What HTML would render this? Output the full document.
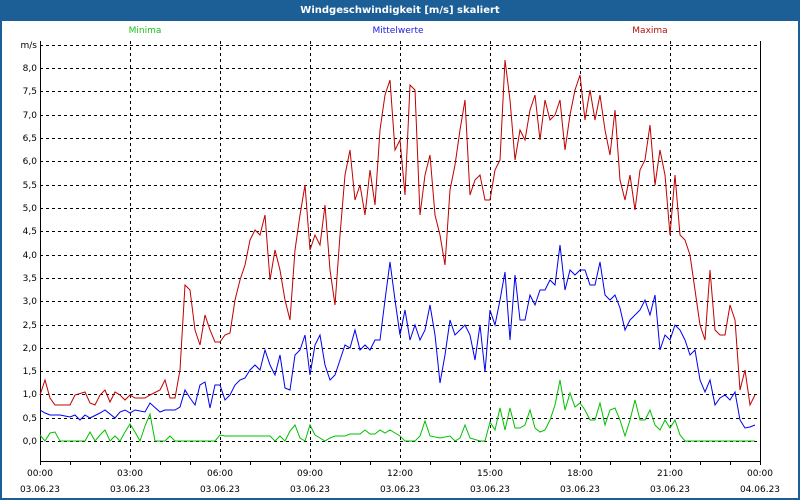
<!DOCTYPE html>
<html><head><meta charset="utf-8"><style>
html,body{margin:0;padding:0;width:800px;height:500px;overflow:hidden;background:#1c5e96;}
</style></head><body>
<svg width="800" height="500" xmlns="http://www.w3.org/2000/svg" style="position:absolute;left:0;top:0;font-family:'DejaVu Sans','Liberation Sans',sans-serif">
<rect x="0" y="0" width="800" height="500" fill="#1c5e96"/>
<rect x="2" y="21" width="796" height="477" fill="#fff"/>
<text x="400" y="13" fill="#fff" font-size="10" font-weight="bold" text-anchor="middle">Windgeschwindigkeit [m/s] skaliert</text>
<text x="145" y="33" fill="#20c020" font-size="9" text-anchor="middle">Minima</text>
<text x="398" y="33" fill="#2020e0" font-size="9" text-anchor="middle">Mittelwerte</text>
<text x="650" y="33" fill="#b01010" font-size="9" text-anchor="middle">Maxima</text>
<g stroke="#000" stroke-width="1" stroke-dasharray="3,3" fill="none">
<path d="M40 45.5H760M40 68.5H760M40 91.5H760M40 115.5H760M40 138.5H760M40 161.5H760M40 185.5H760M40 208.5H760M40 231.5H760M40 255.5H760M40 278.5H760M40 301.5H760M40 325.5H760M40 348.5H760M40 371.5H760M40 394.5H760M40 418.5H760M40 441.5H760"/>
<path d="M130.5 41V461M220.5 41V461M310.5 41V461M400.5 41V461M490.5 41V461M580.5 41V461M670.5 41V461"/>
</g>
<path d="M40.5 41V461.5H760.5V41" stroke="#000" fill="none"/>
<path d="M40.5 461V465M70.5 461V465M100.5 461V465M130.5 461V465M160.5 461V465M190.5 461V465M220.5 461V465M250.5 461V465M280.5 461V465M310.5 461V465M340.5 461V465M370.5 461V465M400.5 461V465M430.5 461V465M460.5 461V465M490.5 461V465M520.5 461V465M550.5 461V465M580.5 461V465M610.5 461V465M640.5 461V465M670.5 461V465M700.5 461V465M730.5 461V465M760.5 461V465" stroke="#000"/>
<g font-size="9" fill="#000" text-anchor="end">
<text x="37" y="48">m/s</text><text x="37" y="71">8,0</text><text x="37" y="94">7,5</text><text x="37" y="118">7,0</text><text x="37" y="141">6,5</text><text x="37" y="164">6,0</text><text x="37" y="188">5,5</text><text x="37" y="211">5,0</text><text x="37" y="234">4,5</text><text x="37" y="258">4,0</text><text x="37" y="281">3,5</text><text x="37" y="304">3,0</text><text x="37" y="328">2,5</text><text x="37" y="351">2,0</text><text x="37" y="374">1,5</text><text x="37" y="397">1,0</text><text x="37" y="421">0,5</text><text x="37" y="444">0,0</text>
</g>
<g font-size="9" fill="#000" text-anchor="middle">
<text x="40" y="476">00:00</text><text x="130" y="476">03:00</text><text x="220" y="476">06:00</text><text x="310" y="476">09:00</text><text x="400" y="476">12:00</text><text x="490" y="476">15:00</text><text x="580" y="476">18:00</text><text x="670" y="476">21:00</text><text x="760" y="476">00:00</text>
<text x="40" y="492">03.06.23</text><text x="130" y="492">03.06.23</text><text x="220" y="492">03.06.23</text><text x="310" y="492">03.06.23</text><text x="400" y="492">03.06.23</text><text x="490" y="492">03.06.23</text><text x="580" y="492">03.06.23</text><text x="670" y="492">03.06.23</text><text x="760" y="492">04.06.23</text>
</g>
<polyline fill="none" stroke="#00c000" stroke-width="1" points="40,435 45,441 50,433 55,432 60,441 85,441 90,432 95,441 100,435 105,430 110,441 115,436 120,441 125,432 130,424 135,432 140,441 145,426 150,414 155,441 165,441 170,436 175,441 215,441 220,435 225,436 270,436 275,441 280,436 285,441 290,431 295,425 300,438 305,441 310,425 315,435 320,438 325,441 330,438 335,436 345,436 350,434 360,434 365,430 370,434 375,434 380,430 385,433 390,430 395,433 400,436 405,441 415,441 420,436 425,421 430,436 440,438 450,436 455,441 460,438 465,425 470,438 480,441 485,441 490,422 495,430 500,408 505,430 510,408 515,428 520,428 525,425 530,410 535,428 540,432 545,430 550,420 555,405 560,380 565,410 570,393 575,407 580,403 585,410 590,420 595,420 600,403 605,425 610,410 615,408 620,420 625,436 630,420 635,400 640,420 645,420 650,410 655,425 660,430 665,420 670,428 675,420 680,435 685,441 755,441"/>
<polyline fill="none" stroke="#0000f0" stroke-width="1" points="40,410 45,413 50,415 60,415 70,417 75,415 80,420 85,415 90,418 100,413 105,410 115,418 120,412 125,410 130,413 135,410 145,412 150,403 160,412 165,410 175,410 180,407 185,390 190,398 195,405 200,385 205,382 210,408 215,385 220,385 225,400 230,395 235,385 240,380 245,378 250,370 255,365 260,370 265,350 270,365 275,375 280,355 285,388 290,390 295,355 300,350 305,335 310,375 315,345 320,335 325,365 330,380 335,375 340,360 345,345 350,348 355,330 360,350 365,345 370,350 375,340 380,340 385,300 390,262 395,300 400,335 405,310 410,340 415,325 420,340 425,330 430,305 435,335 440,383 445,355 450,320 455,335 460,330 465,325 470,335 475,360 480,325 485,372 490,310 495,325 500,300 505,272 510,340 515,275 520,320 525,320 530,295 535,305 540,290 545,290 550,280 555,285 560,245 565,290 570,270 575,275 580,270 585,270 590,285 595,285 600,262 605,295 610,300 615,295 620,308 625,330 630,320 635,315 640,310 645,300 650,315 655,295 660,350 665,335 670,340 675,325 680,330 685,340 690,355 695,350 700,380 705,392 710,380 715,405 720,398 725,395 730,400 735,392 740,420 745,428 750,427 755,425"/>
<polyline fill="none" stroke="#c00000" stroke-width="1" points="40,395 45,380 50,398 55,405 70,405 75,395 85,392 90,403 95,405 100,395 105,390 110,402 115,392 120,395 125,400 130,395 135,398 145,398 150,395 160,390 165,380 170,398 175,398 180,370 185,285 190,290 195,330 200,345 205,315 210,330 215,342 220,342 225,335 230,333 235,300 240,280 245,265 250,240 255,230 260,235 265,215 270,280 275,250 280,270 285,300 290,320 295,250 300,215 305,185 310,250 315,235 320,245 325,205 330,270 335,305 340,235 345,175 350,150 355,200 360,185 365,215 370,170 375,205 380,130 385,95 390,80 395,150 400,140 405,195 410,85 415,90 420,215 425,175 430,155 435,215 440,235 445,265 450,190 455,165 460,130 465,100 470,195 475,180 480,175 485,200 490,200 495,170 500,160 505,60 510,100 515,160 520,130 525,140 530,110 535,95 540,140 545,100 550,120 555,115 560,100 565,150 570,115 575,90 580,75 585,120 590,90 595,120 600,95 605,130 610,155 615,110 620,180 625,200 630,175 635,210 640,170 645,160 650,125 655,185 660,150 665,175 670,235 675,175 680,235 685,240 690,255 695,290 700,325 705,340 710,270 715,330 720,335 725,335 730,305 735,320 740,390 745,370 750,405 755,395"/>
</svg>
</body></html>
